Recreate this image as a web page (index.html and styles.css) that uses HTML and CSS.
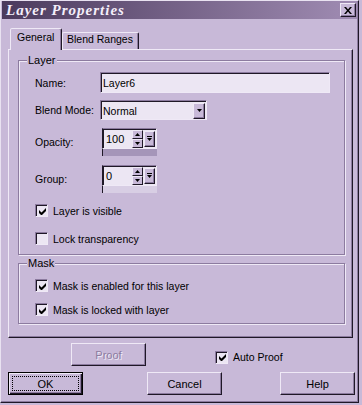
FILE: index.html
```html
<!DOCTYPE html>
<html lang="en">
<head>
  <meta charset="UTF-8">
  <meta name="viewport" content="width=device-width, initial-scale=1.0">
  <title>Layer Properties</title>
  <link rel="stylesheet" href="styles.css">
</head>
<body>
  <div class="window">
    <div class="titlebar">
      <span class="title">Layer Properties</span>
      <div class="close-btn">
        <svg width="8" height="7" viewBox="0 0 8 7"><path d="M0 0h2l2 2.5L6 0h2L5 3.5 8 7H6L4 4.5 2 7H0l3-3.5z" fill="#000"/></svg>
      </div>
    </div>

    <div class="dialog">
      <div class="tabs">
        <div class="tab active">General</div>
        <div class="tab">Blend Ranges</div>
      </div>

      <div class="panel">
        <div class="group layer-group">
          <div class="group-title">Layer</div>

          <div class="row name-row">
            <span class="label">Name:</span>
            <div class="field name-field">Layer6</div>
          </div>

          <div class="row blend-row">
            <span class="label">Blend Mode:</span>
            <div class="field select">
              <span>Normal</span>
              <div class="drop-btn">
                <svg width="5" height="3" viewBox="0 0 5 3"><polygon points="0,0 5,0 2.5,3" fill="#000"/></svg>
              </div>
            </div>
          </div>

          <div class="row spin-row opacity-row">
            <span class="label">Opacity:</span>
            <div class="spinner">
              <div class="spin-box">
                <span class="spin-text">100</span>
                <div class="spin-arrows">
                  <div class="spin-btn"><svg width="5" height="3" viewBox="0 0 5 3"><polygon points="0,3 5,3 2.5,0" fill="#000"/></svg></div>
                  <div class="spin-btn"><svg width="5" height="3" viewBox="0 0 5 3"><polygon points="0,0 5,0 2.5,3" fill="#000"/></svg></div>
                </div>
                <div class="spin-drop">
                  <svg width="5" height="5" viewBox="0 0 5 5"><rect x="0" y="0" width="5" height="1" fill="#000"/><polygon points="0,2 5,2 2.5,5" fill="#000"/></svg>
                </div>
              </div>
              <div class="spin-track dark-track"></div>
            </div>
          </div>

          <div class="row spin-row group-row">
            <span class="label">Group:</span>
            <div class="spinner">
              <div class="spin-box">
                <span class="spin-text">0</span>
                <div class="spin-arrows">
                  <div class="spin-btn"><svg width="5" height="3" viewBox="0 0 5 3"><polygon points="0,3 5,3 2.5,0" fill="#000"/></svg></div>
                  <div class="spin-btn"><svg width="5" height="3" viewBox="0 0 5 3"><polygon points="0,0 5,0 2.5,3" fill="#000"/></svg></div>
                </div>
                <div class="spin-drop">
                  <svg width="5" height="5" viewBox="0 0 5 5"><rect x="0" y="0" width="5" height="1" fill="#000"/><polygon points="0,2 5,2 2.5,5" fill="#000"/></svg>
                </div>
              </div>
              <div class="spin-track light-track"></div>
            </div>
          </div>

          <div class="check visible-row">
            <span class="box"><svg width="7" height="7" viewBox="0 0 7 7"><polygon points="0,2 0,5 2,7 3,7 7,3 7,0 2.5,4.5" fill="#000"/></svg></span>
            <span>Layer is visible</span>
          </div>

          <div class="check lock-row">
            <span class="box"></span>
            <span>Lock transparency</span>
          </div>
        </div>

        <div class="group mask-group">
          <div class="group-title">Mask</div>

          <div class="check mask-enabled">
            <span class="box"><svg width="7" height="7" viewBox="0 0 7 7"><polygon points="0,2 0,5 2,7 3,7 7,3 7,0 2.5,4.5" fill="#000"/></svg></span>
            <span>Mask is enabled for this layer</span>
          </div>

          <div class="check mask-locked">
            <span class="box"><svg width="7" height="7" viewBox="0 0 7 7"><polygon points="0,2 0,5 2,7 3,7 7,3 7,0 2.5,4.5" fill="#000"/></svg></span>
            <span>Mask is locked with layer</span>
          </div>
        </div>
      </div>

      <div class="proof-row">
        <div class="btn disabled proof-btn">Proof</div>
        <div class="check auto-proof">
          <span class="box"><svg width="7" height="7" viewBox="0 0 7 7"><polygon points="0,2 0,5 2,7 3,7 7,3 7,0 2.5,4.5" fill="#000"/></svg></span>
          <span>Auto Proof</span>
        </div>
      </div>

      <div class="button-row">
        <div class="btn default ok-btn"><span class="focus">OK</span></div>
        <div class="btn cancel-btn">Cancel</div>
        <div class="btn help-btn">Help</div>
      </div>
    </div>
  </div>
</body>
</html>
```

FILE: styles.css
```css
* {
  box-sizing: border-box;
}
body {
  margin: 0;
  background: #c8b9d8;
  font-family: "Liberation Sans", Arial, sans-serif;
  font-size: 10.5px;
  color: #000;
}
.window {
  width: 359px;
  height: 403px;
  border: 1px solid;
  border-color: #e9e2f1 #1f1827 #1f1827 #e9e2f1;
  box-shadow: inset -1px -1px 0 #8c7b9f;
  background: #c8b9d8;
}

/* title bar */
.titlebar {
  height: 18px;
  margin: 0 1px;
  padding: 0 1px 0 4px;
  display: flex;
  align-items: center;
  justify-content: space-between;
  background: linear-gradient(to right, #4b3a5d, #a08cb3);
}
.title {
  color: #f4eefa;
  font-family: "Liberation Serif", serif;
  font-style: italic;
  font-weight: bold;
  font-size: 15px;
  letter-spacing: 1px;
  line-height: 16px;
}
.close-btn {
  width: 16px;
  height: 14px;
  display: flex;
  align-items: center;
  justify-content: center;
  background: #c8b9d8;
  border: 1px solid;
  border-color: #efe9f6 #1f1827 #1f1827 #efe9f6;
  box-shadow: inset -1px -1px 0 #8c7b9f;
}

.dialog {
  padding-left: 7px;
}

/* tabs */
.tabs {
  display: flex;
  align-items: flex-end;
  height: 21px;
  margin: 9px 0 0 2px;
}
.tab {
  height: 17px;
  width: 77px;
  padding: 0 0 0 4px;
  line-height: 13px;
  border: 1px solid;
  border-bottom: none;
  border-color: #efe9f6 #1f1827 transparent #efe9f6;
  border-radius: 2px 2px 0 0;
  box-shadow: inset -1px 0 0 #8c7b9f;
  white-space: nowrap;
}
.tab.active {
  position: relative;
  z-index: 1;
  width: 52px;
  height: 22px;
  padding: 2px 0 0 6px;
  margin-bottom: -1px;
  background: #c8b9d8;
}

.panel {
  width: 345px;
  height: 289px;
  padding: 10px 7px 0 9px;
  border: 1px solid;
  border-color: #efe9f6 #1f1827 #1f1827 #efe9f6;
  box-shadow: inset -1px -1px 0 #8c7b9f;
}

/* group boxes */
.group {
  border: 1px solid #8c7b9f;
  box-shadow: 1px 1px 0 #efe9f6, inset 1px 1px 0 #efe9f6;
  padding: 0 0 9px 16px;
}
.group-title {
  display: table;
  margin: -7px 0 0 -8px;
  padding: 0 1px;
  line-height: 12px;
  font-size: 11px;
  background: #c8b9d8;
}
.mask-group {
  margin-top: 8px;
  padding-bottom: 7px;
}

.row {
  display: flex;
  align-items: center;
}
.label {
  width: 65px;
  flex-shrink: 0;
}

/* sunken fields */
.field {
  height: 21px;
  display: flex;
  align-items: center;
  padding-left: 2px;
  background: #ece6f3;
  border: 1px solid;
  border-color: #8c7b9f #efe9f6 #efe9f6 #8c7b9f;
  box-shadow: inset 1px 1px 0 #1f1827;
}
.name-row {
  margin-top: 6px;
}
.name-field {
  width: 230px;
}
.blend-row {
  margin-top: 7px;
}
.select {
  width: 107px;
  height: 20px;
  justify-content: space-between;
  padding: 1px 1px 0 2px;
}
.drop-btn {
  width: 12px;
  height: 16px;
  display: flex;
  align-items: center;
  justify-content: center;
  background: #c8b9d8;
  border: 1px solid;
  border-color: #efe9f6 #1f1827 #1f1827 #efe9f6;
  box-shadow: inset -1px -1px 0 #8c7b9f;
}

/* spinners */
.opacity-row {
  margin-top: 8px;
}
.group-row {
  margin-top: 9px;
}
.spinner {
  width: 55px;
  margin-left: 2px;
}
.spin-box {
  height: 21px;
  display: flex;
  align-items: center;
  padding-left: 1px;
  font-size: 11px;
  background: #ece6f3;
  border: 1px solid;
  border-color: #8c7b9f #efe9f6 #efe9f6 #1f1827;
  box-shadow: inset 1px 1px 0 #1f1827;
}
.spin-text {
  width: 28px;
  padding-left: 2px;
}
.spin-arrows {
  display: flex;
  flex-direction: column;
  margin-top: 1px;
}
.spin-btn {
  width: 11px;
  height: 9px;
  display: flex;
  align-items: center;
  justify-content: center;
  background: #c8b9d8;
  border: 1px solid;
  border-color: #efe9f6 #1f1827 #1f1827 #efe9f6;
}
.spin-drop {
  width: 11px;
  height: 16px;
  margin-left: 1px;
  display: flex;
  align-items: center;
  justify-content: center;
  background: #c8b9d8;
  border: 1px solid;
  border-color: #efe9f6 #1f1827 #1f1827 #efe9f6;
  box-shadow: inset -1px -1px 0 #8c7b9f;
}
.spin-track {
  height: 7px;
  border-left: 1px solid #1f1827;
}
.dark-track {
  background: #a595b9;
}
.light-track {
  background: #d8cee4;
}

/* check boxes */
.check {
  display: flex;
  align-items: center;
  gap: 5px;
}
.box {
  width: 13px;
  height: 13px;
  display: flex;
  align-items: center;
  justify-content: center;
  background: #ece6f3;
  border: 1px solid;
  border-color: #8c7b9f #efe9f6 #efe9f6 #8c7b9f;
  box-shadow: inset 1px 1px 0 #1f1827;
}
.box svg {
  margin: 1px 0 0 1px;
}
.visible-row {
  margin-top: 11px;
}
.lock-row {
  margin-top: 15px;
}
.mask-enabled {
  margin-top: 10px;
}
.mask-locked {
  margin-top: 11px;
}

/* buttons */
.btn {
  width: 75px;
  height: 23px;
  display: flex;
  align-items: center;
  justify-content: center;
  font-size: 11px;
  background: #c8b9d8;
  border: 1px solid;
  border-color: #efe9f6 #1f1827 #1f1827 #efe9f6;
  box-shadow: inset -1px -1px 0 #8c7b9f;
}
.btn.disabled {
  color: #8c7b9f;
  text-shadow: 1px 1px 0 #efe9f6;
}
.btn.default {
  padding: 3px;
  border-color: #000;
  box-shadow: inset 1px 1px 0 #efe9f6, inset -1px -1px 0 #1f1827, inset -2px -2px 0 #8c7b9f;
}
.focus {
  width: 100%;
  height: 100%;
  display: flex;
  align-items: center;
  justify-content: center;
  border: 1px dotted #000;
}
.proof-row {
  display: flex;
  align-items: center;
  margin-top: 5px;
}
.proof-btn {
  margin-left: 63px;
}
.auto-proof {
  margin-left: 69px;
  margin-top: 5px;
}
.button-row {
  display: flex;
  margin-top: 6px;
}
.cancel-btn {
  margin-left: 64px;
}
.help-btn {
  margin-left: 58px;
}
```
